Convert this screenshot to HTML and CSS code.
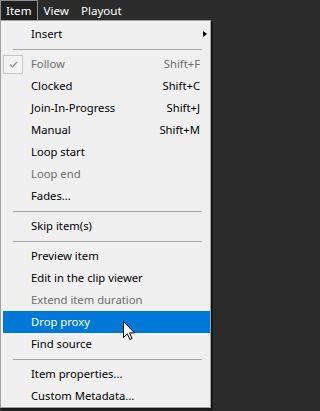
FILE: index.html
```html
<!DOCTYPE html>
<html>
<head>
<meta charset="utf-8">
<link rel="stylesheet" href="styles.css">
</head>
<body>
<div class="menubar">
  <span class="mb-item open">Item</span>
  <span class="mb-item">View</span>
  <span class="mb-item">Playout</span>
</div>
<div class="menu">
  <div class="row"><span class="gutter"></span><span class="label">Insert</span><span class="arrow"></span></div>
  <div class="sep"></div>
  <div class="row disabled"><span class="gutter"><span class="check"><svg width="9" height="7" viewBox="0 0 9 7"><path d="M1 3.5 L3.5 6 L8 1" fill="none" stroke="#8a8a8a" stroke-width="1.2"/></svg></span></span><span class="label">Follow</span><span class="key">Shift+F</span></div>
  <div class="row"><span class="gutter"></span><span class="label">Clocked</span><span class="key">Shift+C</span></div>
  <div class="row"><span class="gutter"></span><span class="label">Join-In-Progress</span><span class="key">Shift+J</span></div>
  <div class="row"><span class="gutter"></span><span class="label">Manual</span><span class="key">Shift+M</span></div>
  <div class="row"><span class="gutter"></span><span class="label">Loop start</span></div>
  <div class="row disabled"><span class="gutter"></span><span class="label">Loop end</span></div>
  <div class="row"><span class="gutter"></span><span class="label">Fades...</span></div>
  <div class="sep"></div>
  <div class="row"><span class="gutter"></span><span class="label">Skip item(s)</span></div>
  <div class="sep"></div>
  <div class="row"><span class="gutter"></span><span class="label">Preview item</span></div>
  <div class="row"><span class="gutter"></span><span class="label">Edit in the clip viewer</span></div>
  <div class="row disabled"><span class="gutter"></span><span class="label">Extend item duration</span></div>
  <div class="row active"><span class="gutter"></span><span class="label">Drop proxy</span></div>
  <div class="row"><span class="gutter"></span><span class="label">Find source</span></div>
  <div class="sep"></div>
  <div class="row"><span class="gutter"></span><span class="label">Item properties...</span></div>
  <div class="row"><span class="gutter"></span><span class="label">Custom Metadata...</span></div>
</div>
<svg class="cursor" width="13" height="20" viewBox="0 0 13 20">
  <path d="M0.5 0.5 L0.5 16.5 L4.3 12.8 L6.8 18.5 L9 17.5 L6.6 11.9 L11.5 11.9 Z" fill="#fff" stroke="#000" stroke-width="1" stroke-linejoin="miter"/>
</svg>
</body>
</html>
```

FILE: styles.css
```css
html, body {
  margin: 0;
  padding: 0;
}
body {
  background: #2b2b2b;
  font-family: "Noto Sans", "Liberation Sans", sans-serif;
  font-size: 11.25px;
  width: 213px;
  height: 411px;
  overflow: hidden;
  position: relative;
}
.menubar {
  display: flex;
  height: 20px;
  background: #2b2b2b;
  color: #fff;
  box-sizing: border-box;
}
.mb-item {
  padding: 1px 6px 0;
  line-height: 19px;
  font-size: 11.6px;
}
.open {
  padding: 1px 5px 0;
  border: 1px solid #8f8f8f;
  border-bottom: none;
  background: #1f1f1f;
  line-height: 18px;
}
.menu {
  width: 211px;
  box-sizing: border-box;
  background: #f0f0f0;
  border: 1px solid #a0a0a0;
  padding: 2px 0 0 2px;
  box-shadow: 2px 2px 2px rgba(0, 0, 0, 0.55);
  color: #000;
}
.row {
  display: flex;
  align-items: center;
  height: 22px;
  line-height: 22px;
  padding-right: 10px;
}
.gutter {
  width: 28px;
  flex: none;
  display: flex;
  align-items: center;
  height: 22px;
}
.label {
  flex: 1;
  white-space: nowrap;
}
.key {
  white-space: nowrap;
}
.disabled {
  color: #6d6d6d;
}
.active {
  background: #0078d7;
  color: #fff;
}
.arrow {
  width: 0;
  height: 0;
  border-top: 3.5px solid transparent;
  border-bottom: 3.5px solid transparent;
  border-left: 4px solid #000;
  margin-right: -7px;
}
.check {
  width: 20px;
  height: 19px;
  box-sizing: border-box;
  border: 1px solid #c6c6c6;
  background: #f3f3f3;
  display: flex;
  align-items: center;
  justify-content: center;
}
.sep {
  height: 1px;
  background: #a5a5a5;
  margin: 4px 8px 3px 10px;
}
.cursor {
  position: absolute;
  left: 123px;
  top: 321px;
}
```
